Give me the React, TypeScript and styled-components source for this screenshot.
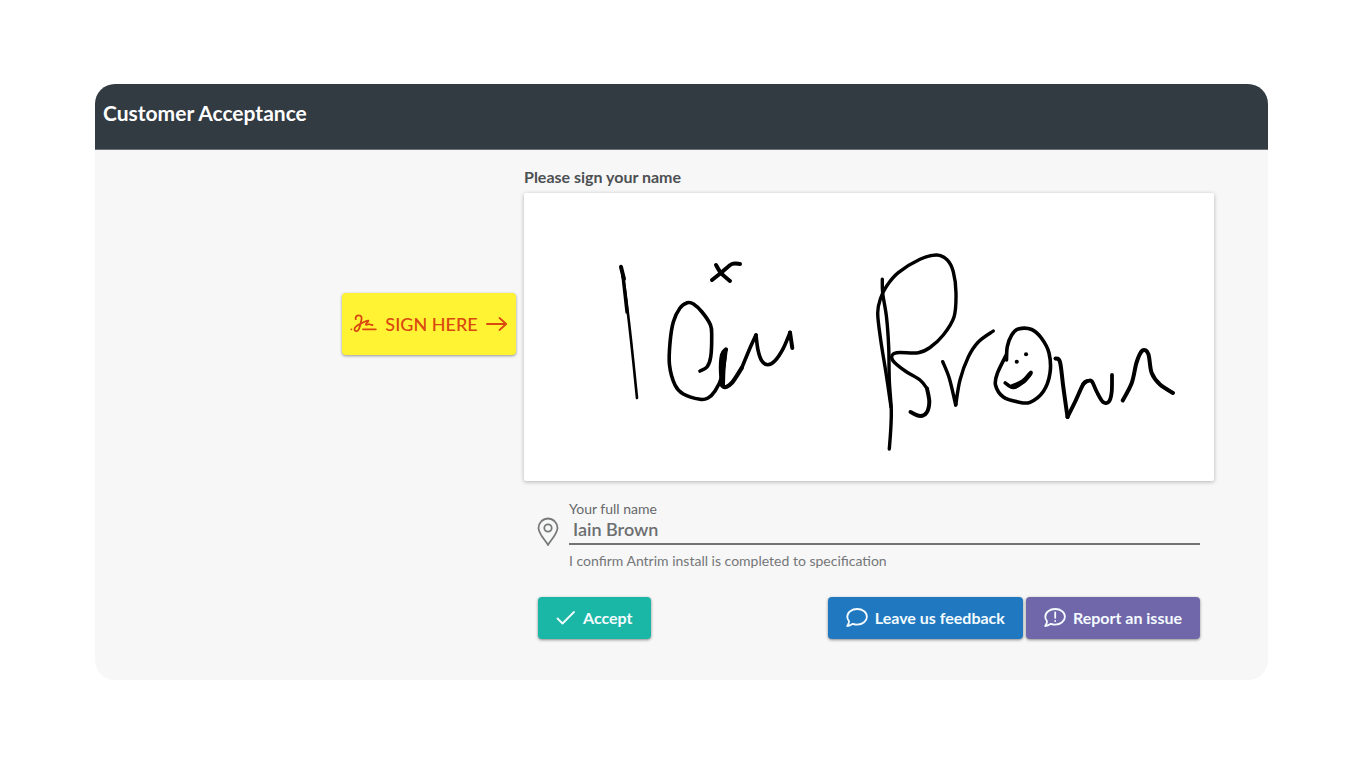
import React from "react";
import styled, { createGlobalStyle } from "styled-components";

const GlobalStyle = createGlobalStyle`
  * { box-sizing: border-box; }
  body { margin: 0; background: #fff; font-family: Lato, "Liberation Sans", sans-serif; }
  button, input { font-family: inherit; }
`;

const Page = styled.div`
  padding: 84px 94px 82px 95px;
`;

const Card = styled.main`
  border-radius: 20px;
  overflow: hidden;
  background: #f7f7f7;
`;

const Header = styled.header`
  height: 66px;
  padding: 14px 8px 0;
  background: #323a42;
  border-bottom: 1px solid #6c7074;
`;

const Title = styled.h1`
  margin: 0;
  font-size: 21px;
  line-height: 30px;
  font-weight: 700;
  color: #fff;
`;

const Body = styled.div`
  display: grid;
  grid-template-columns: minmax(0, 421fr) minmax(0, 690fr);
  column-gap: 8px;
  padding: 16px 54px 41px 0;
`;

const TagColumn = styled.div`
  display: flex;
  justify-content: flex-end;
  align-items: flex-start;
  padding-top: 127px;
`;

const SignTag = styled.button`
  display: flex;
  align-items: center;
  justify-content: space-between;
  width: 174px;
  height: 62px;
  padding: 0 8px;
  border: 0;
  border-radius: 4px;
  background: #fff333;
  color: #d9480f;
  font-size: 18px;
  font-weight: 500;
  line-height: 24px;
  white-space: nowrap;
  box-shadow: 0 1px 3px rgba(0, 0, 0, 0.4);
`;

const SectionTitle = styled.h2`
  margin: 0 0 5px;
  font-size: 16px;
  line-height: 22px;
  font-weight: 700;
  color: #4d5053;
`;

const Pad = styled.div`
  background: #fff;
  border-radius: 2px;
  box-shadow: 0 1px 4px rgba(0, 0, 0, 0.28);
`;

const Signature = styled.svg`
  display: block;
  width: 100%;
  height: auto;
  fill: none;
  stroke: #000;
  stroke-linecap: round;
  stroke-linejoin: round;
`;

const Field = styled.div`
  display: flex;
  gap: 8px;
  margin: 18px 14px 0;
`;

const PinSlot = styled.div`
  width: 23px;
  padding: 18px 0 0;
  margin-left: -1px;
`;

const FieldMain = styled.div`
  flex: 1;
  min-width: 0;
  margin-left: 1px;
`;

const FieldLabel = styled.label`
  display: block;
  font-size: 14px;
  line-height: 20px;
  color: #66686a;
`;

const NameInput = styled.input`
  display: block;
  width: 100%;
  height: 26px;
  padding: 0 4px 4px;
  border: 0;
  border-bottom: 2px solid #707274;
  border-radius: 0;
  outline: 0;
  background: transparent;
  font-size: 18px;
  font-weight: 600;
  color: #6c6e70;
`;

const Hint = styled.p`
  margin: 6px 0 0;
  font-size: 14px;
  line-height: 20px;
  color: #747678;
`;

const Actions = styled.div`
  display: flex;
  gap: 3px;
  margin: 26px 14px 0;
`;

const ActionButton = styled.button<{ $color: string; $push?: boolean }>`
  display: flex;
  align-items: center;
  gap: 7px;
  height: 42px;
  margin-right: ${(p) => (p.$push ? "auto" : "0")};
  padding: 0 18px;
  border: 0;
  border-radius: 4px;
  background: ${(p) => p.$color};
  color: #f4fbff;
  font-size: 16px;
  line-height: 24px;
  font-weight: 700;
  white-space: nowrap;
  box-shadow: 0 1px 3px rgba(0, 0, 0, 0.45);
`;

const Icon = styled.svg`
  display: block;
  flex: none;
  fill: none;
  stroke: currentColor;
  stroke-linecap: round;
  stroke-linejoin: round;
`;

type Point = [number, number];

const smooth = (pts: Point[]) => {
  let d = `M${pts[0][0]} ${pts[0][1]}`;
  for (let i = 0; i < pts.length - 1; i++) {
    const a = pts[i - 1] ?? pts[i];
    const b = pts[i];
    const c = pts[i + 1];
    const e = pts[i + 2] ?? c;
    d += `C${b[0] + (c[0] - a[0]) / 6} ${b[1] + (c[1] - a[1]) / 6} ${c[0] - (e[0] - b[0]) / 6} ${c[1] - (e[1] - b[1]) / 6} ${c[0]} ${c[1]}`;
  }
  return d;
};

const strokes: { width: number; points: Point[] }[] = [
  { width: 2.6, points: [[621, 266], [625, 290], [631, 340], [637, 398]] },
  { width: 4, points: [[621, 267], [624, 279]] },
  { width: 3.4, points: [[623, 276], [627, 312]] },
  { width: 4, points: [[716, 265], [721, 273], [730, 281]] },
  { width: 4, points: [[712, 280], [722, 272], [732, 264], [740, 264]] },
  { width: 3.6, points: [[700, 371], [707, 367], [710.7, 357], [711.7, 337], [710.5, 325], [702, 312], [693.5, 304], [687.3, 302.7], [680, 308], [673.3, 322], [670, 343], [669.5, 365], [675, 385], [683.3, 394], [700, 399.3], [708, 398], [715, 391], [721.7, 377], [726, 350]] },
  { width: 4.2, points: [[726, 349.5], [722, 355], [721, 372], [723.3, 386.5], [731.7, 383], [741.7, 368]] },
  { width: 5, points: [[724.5, 353], [723, 370], [722.5, 385]] },
  { width: 3.6, points: [[741.7, 368], [750, 348], [756, 335]] },
  { width: 3.6, points: [[756, 335], [758, 350], [761.7, 360.7], [767.7, 364.7], [775, 360.7], [783.3, 348.3], [790, 332.5]] },
  { width: 4, points: [[790, 332.5], [792.3, 348]] },
  { width: 3.4, points: [[882.3, 279.3], [882.7, 293.3], [886.5, 317], [888.7, 347], [889.3, 380], [891.3, 410], [890.7, 430], [889.3, 449]] },
  { width: 3.4, points: [[891, 407], [886, 373], [880.7, 340], [877.7, 313], [880.7, 298], [886.7, 286], [898.3, 272.7], [920, 259.3], [936.7, 255], [947.3, 260], [953.3, 271.7], [956, 293], [954, 317], [943.3, 335], [930, 347.5], [918.3, 352.7], [896.7, 352.7], [891.7, 357], [895, 363], [906.7, 372], [920, 380], [927, 388.5]] },
  { width: 4, points: [[927, 388.5], [929.3, 401.7], [926.7, 412.5], [920, 416], [910.5, 412]] },
  { width: 3.4, points: [[942.7, 361.7], [949.3, 378.3], [955.7, 405]] },
  { width: 3.4, points: [[955.7, 405], [960, 380], [968.3, 357], [978.3, 342], [993.3, 331]] },
  { width: 3, points: [[956, 404], [954.5, 396]] },
  { width: 3.6, points: [[1006.5, 360], [1007.3, 346.7], [1011.7, 335], [1018.3, 329], [1031.7, 329.5], [1041.7, 338.5], [1049, 353], [1050, 373], [1043.3, 391.5], [1030, 402.3], [1018.3, 402], [1003.3, 397], [995.5, 385], [997.5, 373], [1006.7, 354]] },
  { width: 4, points: [[1016.7, 361.7], [1016.8, 361.7]] },
  { width: 4, points: [[1026, 354.3], [1026.1, 354.3]] },
  { width: 3.6, points: [[1005.3, 383], [1013.3, 387.5], [1023.3, 382], [1031, 372.5]] },
  { width: 4.6, points: [[1012, 386.5], [1023, 381.5], [1030, 374]] },
  { width: 4, points: [[1055.5, 358.5], [1060, 362], [1063.3, 387], [1067.5, 417]] },
  { width: 4, points: [[1067.5, 417], [1075, 402], [1083.3, 384], [1087, 381]] },
  { width: 3.8, points: [[1083.3, 384], [1088, 381], [1092, 381.5], [1096.7, 391.7], [1103, 402], [1109, 401.5], [1111.7, 391.7], [1112, 375]] },
  { width: 4, points: [[1122.7, 400.5], [1131.7, 383], [1136.7, 362], [1142.5, 350.5], [1148.3, 354], [1151.7, 373], [1160, 384.5], [1173, 393]] },
];

const SignatureIcon = () => (
  <Icon width="27" height="20" viewBox="0 0 27 20" strokeWidth="1.8" aria-hidden="true">
    <path d="M1.300 15.300h.1M5.800 5.200C5 2.800 6.800 1.300 8.800 1.300C11.200 1.300 12 3 11.500 5.500C10.800 9 10 13 8.600 15.600C7.500 17.800 4.500 17.500 4.500 15.300C4.500 12.500 8.500 10.500 11.500 9.300C14 8 16.500 6.300 18.300 6.600C19 7 15.500 9.500 16 10.600C16.600 11.400 18.600 9.600 19.600 10.200C20 11 21.500 11 22.500 11M13 15.300H25.800" />
  </Icon>
);

const ArrowIcon = () => (
  <Icon width="22" height="18" viewBox="0 0 22 18" strokeWidth="1.8" aria-hidden="true">
    <path d="M1 9h19M13.500 3l6.700 6l-6.700 6" />
  </Icon>
);

const PinIcon = () => (
  <Icon width="22" height="30" viewBox="0 0 22 30" strokeWidth="1.8" color="#77797b" aria-hidden="true">
    <path d="M11 28C9 24 1.500 17 1.500 11a9.500 9.500 0 0 1 19 0C20.500 17 13 24 11 28Z" />
    <circle cx="11" cy="11" r="3.700" />
  </Icon>
);

const CheckIcon = () => (
  <Icon width="20" height="20" viewBox="0 0 20 20" strokeWidth="1.8" aria-hidden="true">
    <path d="M1.500 10.500l5 5L18 4" />
  </Icon>
);

const BubbleIcon = ({ alert = false }: { alert?: boolean }) => (
  <Icon width="22" height="22" viewBox="0 0 22 22" strokeWidth="1.8" aria-hidden="true">
    <path d="M3 14.200C1.800 12.800 1.300 11.300 1.300 9.700C1.300 5.300 5.700 2 11.200 2s9.700 3.300 9.700 7.700s-4.200 7.900-9.700 7.900c-1.500 0-3-.3-4.300-.8C5.200 18 3.300 19 1.200 19C2.300 17.600 3.100 16 3 14.200Z" />
    {alert && <path d="M11.200 5.500v5.300M11.200 14v.1" />}
  </Icon>
);

export default function App() {
  return (
    <>
      <GlobalStyle />
      <Page>
        <Card>
          <Header>
            <Title>Customer Acceptance</Title>
          </Header>
          <Body>
            <TagColumn>
              <SignTag type="button">
                <SignatureIcon />
                SIGN HERE
                <ArrowIcon />
              </SignTag>
            </TagColumn>
            <form onSubmit={(e) => e.preventDefault()}>
              <SectionTitle>Please sign your name</SectionTitle>
              <Pad>
                <Signature viewBox="524 193 690 288" role="img" aria-label="Signature">
                  {strokes.map((s, i) => (
                    <path key={i} d={smooth(s.points)} strokeWidth={s.width} />
                  ))}
                </Signature>
              </Pad>
              <Field>
                <PinSlot>
                  <PinIcon />
                </PinSlot>
                <FieldMain>
                  <FieldLabel htmlFor="full-name">Your full name</FieldLabel>
                  <NameInput id="full-name" type="text" defaultValue="Iain Brown" aria-describedby="name-hint" />
                  <Hint id="name-hint">I confirm Antrim install is completed to specification</Hint>
                </FieldMain>
              </Field>
              <Actions>
                <ActionButton type="submit" $color="#1bb7a6" $push>
                  <CheckIcon />
                  Accept
                </ActionButton>
                <ActionButton type="button" $color="#2079c0">
                  <BubbleIcon />
                  Leave us feedback
                </ActionButton>
                <ActionButton type="button" $color="#7067aa">
                  <BubbleIcon alert />
                  Report an issue
                </ActionButton>
              </Actions>
            </form>
          </Body>
        </Card>
      </Page>
    </>
  );
}
